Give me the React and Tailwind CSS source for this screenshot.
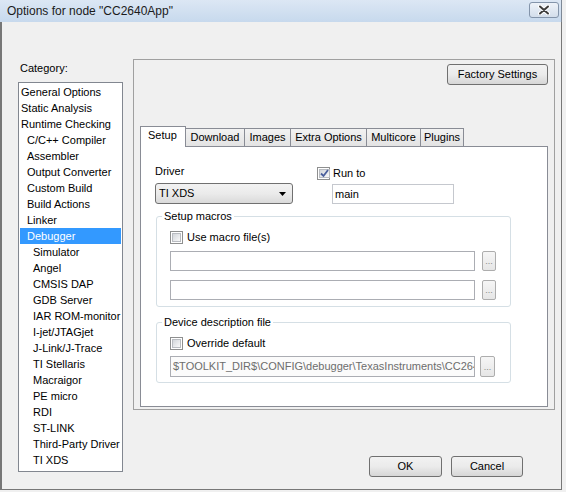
import React from 'react';

const categories = [
  ['General Options', 0], ['Static Analysis', 0], ['Runtime Checking', 0],
  ['C/C++ Compiler', 1], ['Assembler', 1], ['Output Converter', 1], ['Custom Build', 1],
  ['Build Actions', 1], ['Linker', 1], ['Debugger', 1],
  ['Simulator', 2], ['Angel', 2], ['CMSIS DAP', 2], ['GDB Server', 2], ['IAR ROM-monitor', 2],
  ['I-jet/JTAGjet', 2], ['J-Link/J-Trace', 2], ['TI Stellaris', 2], ['Macraigor', 2],
  ['PE micro', 2], ['RDI', 2], ['ST-LINK', 2], ['Third-Party Driver', 2], ['TI XDS', 2],
];

const indent = ['pl-[1px]', 'pl-[7px]', 'pl-[13px]'];

const tabs = [
  { label: 'Setup', w: 'w-[46px]', active: true },
  { label: 'Download', w: 'w-[59px]' },
  { label: 'Images', w: 'w-[46px]' },
  { label: 'Extra Options', w: 'w-[76px]' },
  { label: 'Multicore', w: 'w-[54px]' },
  { label: 'Plugins', w: 'w-[43px]' },
];

const Check = ({ checked }) => (
  <span className="w-[13px] h-[13px] shrink-0 border border-[#8e8f8f] bg-white p-[1px] flex">
    <span className="flex-1 border border-[#b9bcc1] bg-gradient-to-br from-[#d3d6db] to-[#f9f9f9] flex items-center justify-center">
      {checked && (
        <svg width="9" height="9" viewBox="0 0 9 9">
          <path d="M1 4.5 L3.5 7 L8 1" fill="none" stroke="#4a5f9c" strokeWidth="1.8" />
        </svg>
      )}
    </span>
  </span>
);

const WinButton = ({ children, className }) => (
  <button className={`h-[21px] rounded-[3px] border border-[#707070] bg-gradient-to-b from-[#f2f2f2] via-[#ebebeb] to-[#d6d6d6] flex items-center justify-center text-[11px] text-black ${className}`}>
    {children}
  </button>
);

const Browse = ({ className }) => (
  <button className={`h-[20px] rounded-[2px] border border-[#adadad] bg-gradient-to-b from-[#f6f6f6] to-[#e6e6e6] flex items-end justify-center pb-[4px] text-[9px] leading-none text-[#8a8a8a] ${className}`}>
    ...
  </button>
);

function Group({ title, children, className }) {
  return (
    <fieldset className={`w-[355px] ml-[1px] border border-[#d5dfe5] rounded-[3px] ${className}`}>
      <legend className="ml-[5px] px-[2px] h-[13px] leading-[13px]">{title}</legend>
      {children}
    </fieldset>
  );
}

export default function App() {
  return (
    <div className="w-[566px] h-[492px] bg-[#f0f0f0] overflow-hidden font-['Liberation_Sans',Arial,sans-serif] text-[11px] text-black">
      <div className="w-[562px] h-[490px] flex flex-col">
        {/* title bar */}
        <div className="h-[22px] shrink-0 flex items-center justify-between pl-[7px] pr-[2px] bg-gradient-to-b from-[#dce7f4] to-[#c7d9ed] border-r border-[#7d8896]">
          <span className="text-[12px] text-[#1b1b1b]">Options for node "CC2640App"</span>
          <button className="w-[30px] h-[16px] mb-[2px] rounded-[3px] border border-[#8394aa] bg-gradient-to-b from-[#eef3f9] to-[#d3deeb] flex items-center justify-center">
            <svg width="14" height="10" viewBox="0 0 14 10">
              <path d="M3 1.5 L11 8.5 M11 1.5 L3 8.5" stroke="#ffffff" strokeWidth="4" strokeLinecap="round" />
              <path d="M3 1.5 L11 8.5 M11 1.5 L3 8.5" stroke="#3d3d3d" strokeWidth="2" strokeLinecap="round" />
            </svg>
          </button>
        </div>

        {/* body */}
        <div className="flex-1 flex items-start border-l-2 border-r border-b border-[#777777]">
          {/* category list */}
          <div className="pl-[16px] pt-[40px] flex flex-col">
            <span className="h-[13px] leading-[13px] pl-[2px]">Category:</span>
            <div className="mt-[7px] w-[105px] h-[390px] border border-[#828790] bg-white pt-[1px] px-[1px]">
              {categories.map(([name, lvl]) => (
                <div
                  key={name}
                  className={`h-[16px] leading-[16px] whitespace-nowrap ${indent[lvl]} ${name === 'Debugger' ? 'bg-[#3399ff] text-white' : ''}`}
                >
                  {name}
                </div>
              ))}
            </div>
          </div>

          {/* options panel */}
          <div className="ml-[10px] mt-[37px] flex flex-col">
            <div className="w-[422px] h-[351px] border border-[#a0a0a0] px-[6px] pt-[4px] flex flex-col">
              <div className="flex justify-end">
                <WinButton className="w-[101px]">Factory Settings</WinButton>
              </div>

              {/* tabs */}
              <div className="mt-[41px] h-[20px] flex items-end">
                {tabs.map((t, i) => (
                  <div
                    key={t.label}
                    className={
                      t.active
                        ? `${t.w} h-[21px] -mb-[1px] relative z-10 bg-white border border-b-0 border-[#898c95] pl-[7px] leading-[17px]`
                        : `${t.w} h-[18px] bg-gradient-to-b from-[#f2f2f2] to-[#e3e3e3] border-t border-r border-[#898c95] flex items-center justify-center leading-[17px]`
                    }
                  >
                    {t.label}
                  </div>
                ))}
              </div>

              {/* tab page */}
              <div className="h-[261px] bg-white border border-[#898c95] pl-[14px]">
                <div className="flex items-start">
                  <div className="w-[138px] pt-[18px] flex flex-col">
                    <span className="h-[13px] leading-[13px]">Driver</span>
                    <div className="mt-[5px] h-[21px] rounded-[3px] border border-[#707070] bg-gradient-to-b from-[#f2f2f2] via-[#ebebeb] to-[#dadada] flex items-center justify-between pl-[3px] pr-[6px]">
                      <span>TI XDS</span>
                      <svg width="7" height="4" viewBox="0 0 7 4">
                        <path d="M0 0 L7 0 L3.5 4 Z" fill="#000000" />
                      </svg>
                    </div>
                  </div>
                  <div className="ml-[24px] pt-[20px] flex flex-col">
                    <label className="h-[13px] flex items-center gap-[3px]">
                      <Check checked />
                      <span className="leading-[13px]">Run to</span>
                    </label>
                    <div className="mt-[4px] ml-[15px] w-[122px] h-[20px] border border-[#c5c8ce] bg-white pl-[2px] flex items-center">
                      main
                    </div>
                  </div>
                </div>

                <Group title="Setup macros" className="mt-[6px]">
                  <div className="px-[13px] pt-[8px] pb-[6px] flex flex-col">
                    <label className="h-[13px] flex items-center gap-[4px]">
                      <Check />
                      <span className="leading-[13px]">Use macro file(s)</span>
                    </label>
                    <div className="mt-[7px] flex gap-[7px]">
                      <div className="w-[305px] h-[20px] border border-[#abadb3] bg-white" />
                      <Browse className="w-[14px]" />
                    </div>
                    <div className="mt-[9px] flex gap-[7px]">
                      <div className="w-[305px] h-[20px] border border-[#abadb3] bg-white" />
                      <Browse className="w-[14px]" />
                    </div>
                  </div>
                </Group>

                <Group title="Device description file" className="mt-[9px]">
                  <div className="px-[13px] pt-[8px] pb-[5px] flex flex-col">
                    <label className="h-[13px] flex items-center gap-[4px]">
                      <Check />
                      <span className="leading-[13px]">Override default</span>
                    </label>
                    <div className="mt-[6px] flex gap-[5px]">
                      <div className="w-[305px] h-[21px] border border-[#abadb3] bg-[#fbfbfb] pl-[2px] flex items-center overflow-hidden whitespace-nowrap text-[#6d6d6d]">
                        $TOOLKIT_DIR$\CONFIG\debugger\TexasInstruments\CC2640F128.ddf
                      </div>
                      <Browse className="w-[15px] h-[21px]" />
                    </div>
                  </div>
                </Group>
              </div>
            </div>

            {/* dialog buttons */}
            <div className="mt-[46px] ml-[236px] flex gap-[9px]">
              <WinButton className="w-[73px]">OK</WinButton>
              <WinButton className="w-[72px]">Cancel</WinButton>
            </div>
          </div>
        </div>
      </div>
    </div>
  );
}
